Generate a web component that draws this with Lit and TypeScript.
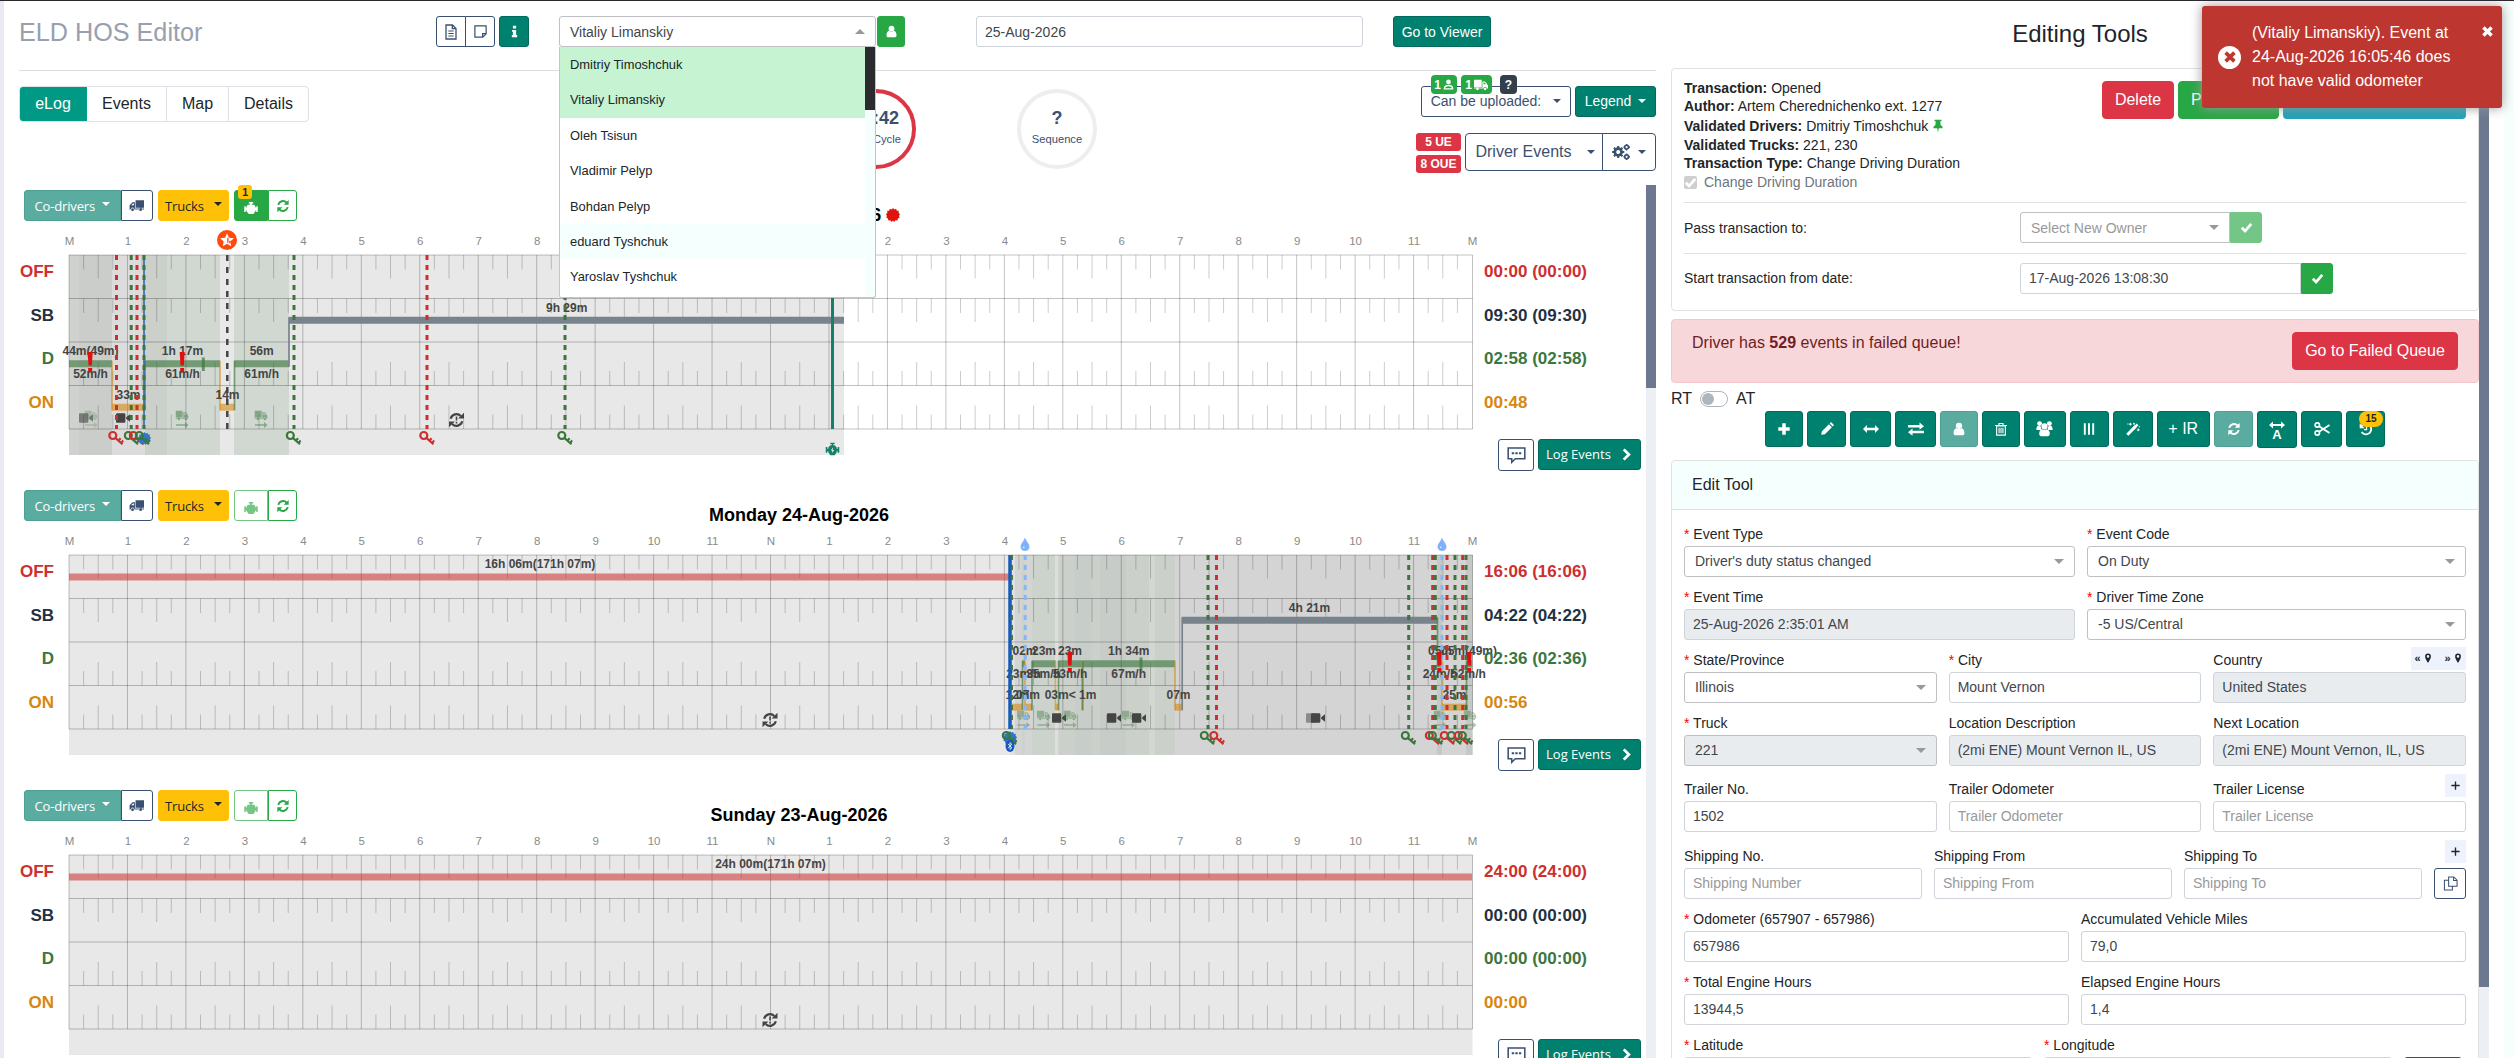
import { LitElement, html, svg, css, nothing } from "lit";
import { customElement, property } from "lit/decorators.js";

const ICONS: Record<string, unknown> = {
  file: svg`<path d="M3 1h6.5L13 4.5V15H3z M9.3 1v3.7H13" fill="none" stroke="currentColor" stroke-width="1.3"/><path d="M5.3 7h5.4M5.3 9.5h5.4M5.3 12h5.4" stroke="currentColor" stroke-width="1.1"/>`,
  note: svg`<path d="M2 2h12v8.5L10.5 14H2z M14 10.3h-3.7V14" fill="none" stroke="currentColor" stroke-width="1.3"/>`,
  info: svg`<path d="M6 1h4v3.4H6zM5 6h5v6.4h1.3V15H4.7v-2.6H6V8.4H5z" fill="currentColor"/>`,
  user: svg`<circle cx="8" cy="4.4" r="3.6" fill="currentColor"/><path d="M1.8 12.6C1.8 9 3.6 7 5.2 7c1.8 1.4 3.8 1.4 5.6 0 1.6 0 3.4 2 3.4 5.6 0 1.700-1 2.600-2.400 2.600H4.200c-1.400 0-2.400-.9-2.400-2.600z" fill="currentColor"/>`,
  userLine: svg`<circle cx="8" cy="4.200" r="3.400" fill="currentColor"/><path d="M2 14.300c0-3.300 2.400-4.800 6-4.800s6 1.500 6 4.800z" fill="none" stroke="currentColor" stroke-width="2"/>`,
  truck: svg`<path d="M16 2.500H7v8h9zM6.300 4.500H3.700L.6 7.600v4.600h1.200a2 2 0 0 1 4 0h4.600a2 2 0 0 1 4 0H16v-1H6.300zM5.300 5.800v2H2.200l2-2z" fill="currentColor" fill-rule="evenodd"/><circle cx="3.800" cy="12.400" r="1.500" fill="currentColor"/><circle cx="12.400" cy="12.400" r="1.500" fill="currentColor"/>`,
  truckR: svg`<path d="M0 2h8.800v8.500H0zM9.600 4h2.800L15 6.800v1l1 .4v3.900h-1.300a2 2 0 0 0-4 0H6a2 2 0 0 0-4 0H0v-.9h9.600zM10.900 5.200v2h2.800l-1.800-2z" fill="currentColor" fill-rule="evenodd"/><circle cx="4" cy="12.400" r="1.600" fill="currentColor"/><circle cx="12.700" cy="12.400" r="1.600" fill="currentColor"/>`,
  engine: svg`<path d="M5.500 1h5v1.800H9v1.400h2.600l1.400 1.800v1.400h1V6h1.700v6.500H14v-1.700h-1v1l-2.300 3H5.400L3 11.800v-1H2v1.700H.3V6H2v1.400h1V6l1.400-1.800H7V2.800H5.500z" fill="currentColor"/>`,
  engineBolt: svg`<path d="M5.500.8h5v1.600H9v1.400h1.500l2.300 2.400v1.400h1.100V5.800H16v6.600h-2.100v-1.800h-1.100v1.200l-2.300 3.400h-5l-2.300-3.400v-1.200H2.100v1.800H0V5.800h2.100v1.800h1.100V6.200l2.300-2.400H7V2.400H5.500zM8.700 6L6 9.700h1.700l-.4 3 2.700-3.700H8.300z" fill="currentColor" fill-rule="evenodd"/>`,
  sync: svg`<path d="M2.600 6.700A5.600 5.600 0 0 1 12 4M13.400 9.300A5.600 5.600 0 0 1 4 12" fill="none" stroke="currentColor" stroke-width="2.200"/><path d="M14.500 1v5.700H8.800zM1.500 15V9.300h5.700z" fill="currentColor"/>`,
  syncAlert: svg`<path d="M2.200 6.700A6 6 0 0 1 12.300 4M13.800 9.300A6 6 0 0 1 3.700 12" fill="none" stroke="currentColor" stroke-width="2.200"/><path d="M15.500 .8v5.800H9.600zM.5 15.200V9.400h5.900z" fill="currentColor"/><path d="M8 4.600v4M8 9.800v1.600" stroke="currentColor" stroke-width="1.600"/>`,
  comment: svg`<path d="M1 2.500h14v9H7l-3 3v-3H1z" fill="none" stroke="currentColor" stroke-width="1.300"/><path d="M4 7h2M7 7h2M10 7h2" stroke="currentColor" stroke-width="1.600"/>`,
  chevron: svg`<path d="M4.600 1.700L10.900 8l-6.300 6.300" fill="none" stroke="currentColor" stroke-width="3.400"/>`,
  gears: svg`<circle cx="5.500" cy="8" r="3" fill="none" stroke="currentColor" stroke-width="2.400"/><path d="M5.500 2.600v2M5.500 11.400v2M.1 8h2M8.900 8h2M1.700 4.200l1.400 1.400M7.900 10.400l1.400 1.400M9.300 4.200L7.900 5.600M3.100 10.400l-1.400 1.400" stroke="currentColor" stroke-width="1.800"/><circle cx="13" cy="3.700" r="1.700" fill="none" stroke="currentColor" stroke-width="1.500"/><circle cx="13" cy="12.300" r="1.700" fill="none" stroke="currentColor" stroke-width="1.500"/><path d="M13 .8v1M13 5.600v1M10.200 3.700h1M15 3.700h1M13 9.400v1M13 14.200v1M10.200 12.300h1M15 12.300h1" stroke="currentColor" stroke-width="1.300"/>`,
  check: svg`<path d="M2.200 8.400L6.300 12.400 13.800 3.600" fill="none" stroke="currentColor" stroke-width="3.400"/>`,
  pin: svg`<path d="M4 .8h8v1.700h-1.400l.4 4.400 2.200 2v1.700H8.900L8 15.500l-.9-4.900H2.800V8.900l2.200-2 .4-4.400H4z" fill="currentColor"/>`,
  marker: svg`<path d="M8 .8a4.600 4.600 0 0 1 4.600 4.600C12.600 9 8 15.500 8 15.500S3.400 9 3.400 5.400A4.600 4.600 0 0 1 8 .8zm0 2.500a2.100 2.100 0 1 0 0 4.200 2.100 2.100 0 0 0 0-4.200z" fill="currentColor" fill-rule="evenodd"/>`,
  times: svg`<path d="M3 3l10 10M13 3L3 13" stroke="currentColor" stroke-width="4.200"/>`,
  plus: svg`<path d="M8 1.500v13M1.500 8h13" stroke="currentColor" stroke-width="4"/>`,
  plusThin: svg`<path d="M8 2v12M2 8h12" stroke="currentColor" stroke-width="2"/>`,
  pencil: svg`<path d="M1.300 14.700l.9-4.200 8-8 3.400 3.400-8 8zM11 1.700l.9-.9c.5-.5 1-.5 1.500 0l2 2c.5.5.5 1 0 1.500l-.9.9zM2.900 11.900l1.300 1.300" fill="currentColor"/>`,
  arrowsH: svg`<path d="M0 8l4-4v2.700h8V4l4 4-4 4V9.300H4V12z" fill="currentColor"/>`,
  exchange: svg`<path d="M0 4h11.500V1.500L16 5.200l-4.500 3.600V6.400H0zM16 9.800H4.500V7.600L0 11.200l4.500 3.600v-2.500H16z" fill="currentColor"/>`,
  trash: svg`<path d="M3 4.500h10V15H3zM1.200 4h13.600M5.700 4V1.700h4.600V4M5.800 6.500v6.300M8 6.500v6.300M10.200 6.500v6.300" fill="none" stroke="currentColor" stroke-width="1.300"/>`,
  users: svg`<circle cx="3.400" cy="3.400" r="2.300" fill="currentColor"/><circle cx="12.600" cy="3.400" r="2.300" fill="currentColor"/><circle cx="8" cy="6" r="2.900" fill="currentColor"/><path d="M.3 9.400C.3 6.500 1.500 5.500 2 5.500l2.600.6c0 1.500.3 2.300 1 3.300zM15.700 9.400c0-2.900-1.200-3.900-1.700-3.900l-2.600.6c0 1.500-.3 2.300-1 3.300zM3 13c0-2.800 1.500-4.300 2.700-4.300 1.400 1.100 3.200 1.100 4.600 0C11.500 8.700 13 10.200 13 13c0 1.300-.8 2.300-2 2.300H5c-1.200 0-2-1-2-2.300z" fill="currentColor"/>`,
  bars: svg`<path d="M3.200 1.500v13M8 1.500v13M12.800 1.500v13" stroke="currentColor" stroke-width="2.200"/>`,
  magic: svg`<path d="M1.500 14.500L11 5" stroke="currentColor" stroke-width="3.400"/><path d="M10 6l3.200-3.200" stroke="currentColor" stroke-width="2.800"/><path d="M5 1v3M3.500 2.500h3M1.500 2.300h1.400M9.200 1v2M8.200 2h2M14 7.500v3M12.500 9h3M14.500 5.500h1.400" stroke="currentColor" stroke-width="1.100"/>`,
  scissors: svg`<circle cx="3.300" cy="4" r="2.200" fill="none" stroke="currentColor" stroke-width="1.700"/><circle cx="3.300" cy="12" r="2.200" fill="none" stroke="currentColor" stroke-width="1.700"/><path d="M5 5.200L15.500 12M5 10.800L15.500 4" stroke="currentColor" stroke-width="1.800"/>`,
  history: svg`<path d="M3.300 4.300A6 6 0 1 1 3 11.500" fill="none" stroke="currentColor" stroke-width="2.100"/><path d="M.8 1.500v5.700h5.700z" fill="currentColor"/><path d="M8.600 4.500v4.200H5.800" fill="none" stroke="currentColor" stroke-width="1.500"/>`,
  copy: svg`<path d="M6 1h5.500L15 4.500V11H6zM11.300 1v3.700H15M6 4.500H1.500V15H10v-4" fill="none" stroke="currentColor" stroke-width="1.100"/>`,
  key: svg`<circle cx="4.800" cy="5" r="3.500" fill="none" stroke="currentColor" stroke-width="2.200"/><path d="M7.300 7.400l7.200 6.400M10.300 10.300l2.300-2.600M12.900 12.600l2.300-2.600" fill="none" stroke="currentColor" stroke-width="2.100"/>`,
  camera: svg`<path d="M0 4c0-1 .6-1.500 1.500-1.500h7.700c.9 0 1.500.6 1.500 1.500v8c0 1-.6 1.500-1.500 1.500H1.500C.6 13.500 0 13 0 12zM11.600 7.200L16 3.600v8.800l-4.400-3.600z" fill="currentColor"/>`,
  burst: svg`<path d="M8 0l1.500 1.800L11.600.9l.7 2.200 2.300.1-.2 2.300L16 7l-1.200 2 .9 2.100-2.200.8-.3 2.300-2.300-.2L9.300 16 8 14.400 6.300 16l-1.500-1.900-2.200.2-.3-2.300L.3 11l.8-2L0 7l1.600-1.500-.2-2.300 2.300-.1L4.400.9l2.100.9z" fill="currentColor"/>`,
  star: svg`<circle cx="8" cy="8" r="8" fill="#ff4a0f"/><path d="M8 2.500l1.600 3.600 3.900.4-2.900 2.600.8 3.900L8 11l-3.400 2 .8-3.900L2.500 6.500l3.900-.4z" fill="#fff"/><path d="M8.700 6.200v4M10.300 8.500v2" stroke="#ff4a0f" stroke-width="1.100"/>`,
  drop: svg`<path d="M8 .5C9 4 13 7 13 10.600a5 5 0 0 1-10 0C3 7 7 4 8 .5z" fill="currentColor" stroke="currentColor"/><circle cx="6.500" cy="11.400" r=".9" fill="#fff"/>`,
  bluetooth: svg`<ellipse cx="8" cy="8" rx="6" ry="8" fill="currentColor"/><path d="M5.300 5.300l5.200 5L8 12.600V3.400l2.500 2.300-5.200 5" fill="none" stroke="#fff" stroke-width="1"/>`,
};

const icon = (name: string, size = 16) =>
  html`<svg class="ic" width=${size} height=${size} viewBox="0 0 16 16">${ICONS[name]}</svg>`;

const glyph = (name: string, cx: number, cy: number, size: number, color: string, opacity = 1) =>
  svg`<svg x=${cx - size / 2} y=${cy - size / 2} width=${size} height=${size} viewBox="0 0 16 16" color=${color} opacity=${opacity}>${ICONS[name]}</svg>`;

type Status = "OFF" | "SB" | "D" | "ON";
interface Segment { s: Status; a: number; b: number; }
interface Label { t: string; x: number; y: number; }
interface Marker { x: number; c: string; dash?: string; w?: number; }
interface Mark { i: string; x: number; y: number; size: number; c: string; o?: number; }
interface Zone { a: number; b: number; c: string; }
interface Day {
  title: string; live?: boolean; engineOn?: boolean;
  zones: Zone[]; segs: Segment[]; labels: Label[]; markers: Marker[]; marks: Mark[];
  alerts: number[]; ticks: number[]; totals: string[];
}

const RED = "#cd2f2f", GREEN = "#3c763d", SKY = "#84b6fb";
const LINE_Y: Record<Status, number> = { OFF: 22, SB: 65.300, D: 108.800, ON: 152.200 };
const LINE_C: Record<Status, string> = { OFF: "rgba(205,47,47,.56)", SB: "#79838b", D: "rgba(60,118,61,.62)", ON: "rgba(214,135,15,.6)" };
const X0 = 69, HOUR = 58.46;
const HOURS = ["M", "1", "2", "3", "4", "5", "6", "7", "8", "9", "10", "11", "N", "1", "2", "3", "4", "5", "6", "7", "8", "9", "10", "11", "M"];

const key = (x: number, c: string): Mark => ({ i: "key", x: x + 1.500, y: 183.500, size: 16, c });
const truck = (x: number, o = 0.500): Mark => ({ i: "truckR", x, y: 160.500, size: 13, c: GREEN, o });
const cam = (x: number, o = 1): Mark => ({ i: "camera", x, y: 163, size: 14, c: "#444", o });

const DAYS: Day[] = [
  {
    title: "Tuesday 25-Aug-2026", live: true, engineOn: true,
    zones: [
      { a: 69, b: 844, c: "#e8e8e8" }, { a: 69, b: 112, c: "#cfd2ce" }, { a: 79, b: 112, c: "#cacdca" },
      { a: 112, b: 145, c: "#dcdcdc" }, { a: 145, b: 220, c: "#d1d8d1" }, { a: 145, b: 167, c: "#cbd0cb" }, { a: 234, b: 289, c: "#d1d8d1" },
    ],
    segs: [
      { s: "D", a: 69, b: 112 }, { s: "ON", a: 112, b: 145 }, { s: "D", a: 145, b: 220 }, { s: "ON", a: 220, b: 234.500 },
      { s: "D", a: 234.500, b: 289 }, { s: "SB", a: 289, b: 844 },
    ],
    labels: [
      { t: "44m(49m)", x: 90.500, y: 96 }, { t: "52m/h", x: 90.500, y: 119 }, { t: "33m", x: 128.500, y: 140 },
      { t: "1h 17m", x: 182.500, y: 96 }, { t: "61m/h", x: 182.500, y: 119 }, { t: "14m", x: 227.500, y: 140 },
      { t: "56m", x: 261.700, y: 96 }, { t: "61m/h", x: 261.700, y: 119 }, { t: "9h 29m", x: 566.700, y: 53 },
    ],
    markers: [
      { x: 116.500, c: RED }, { x: 131.200, c: GREEN }, { x: 137, c: RED }, { x: 144, c: "#1f5fa8", dash: "none", w: 1.500 },
      { x: 144, c: GREEN }, { x: 227.300, c: "#444", dash: "6 6", w: 2.500 }, { x: 294, c: GREEN }, { x: 427, c: RED },
      { x: 565, c: GREEN }, { x: 832.500, c: "#15806a", dash: "none", w: 3 },
    ],
    marks: [
      cam(86, 0.600), truck(91, 0.250), cam(123), truck(182), truck(261), { i: "syncAlert", x: 456.500, y: 165, size: 16, c: "#444" },
      key(114.500, RED), key(130, GREEN), key(135, RED), { i: "burst", x: 144.500, y: 183.500, size: 13, c: "#2f78c4" }, key(141, GREEN),
      key(292, GREEN), key(425.500, RED), key(563.500, GREEN),
      { i: "engineBolt", x: 832.500, y: 194, size: 14, c: "#15806a" }, { i: "star", x: 227, y: -15, size: 20, c: RED },
    ],
    alerts: [90.200, 182.200], ticks: [203.300],
    totals: ["00:00 (00:00)", "09:30 (09:30)", "02:58 (02:58)", "00:48"],
  },
  {
    title: "Monday 24-Aug-2026",
    zones: [
      { a: 69, b: 1010, c: "#e8e8e8" }, { a: 1010, b: 1472.500, c: "#d4d4d4" }, { a: 1010, b: 1015, c: "#e0e0e0" },
      { a: 1022, b: 1025, c: "#ccd2cc" }, { a: 1032, b: 1055, c: "#ccd2cc" }, { a: 1055, b: 1058.500, c: "#dedede" }, { a: 1058.500, b: 1175, c: "#cbd0cb" },
      { a: 1075, b: 1092, c: "#c7cdc8" }, { a: 1100, b: 1126, c: "#c8ccc8" }, { a: 1149, b: 1155, c: "#d2d8d0" },
      { a: 1437, b: 1442, c: "#c5c9c5" }, { a: 1466, b: 1472.500, c: "#c5c9c5" },
    ],
    segs: [
      { s: "OFF", a: 69, b: 1010 }, { s: "ON", a: 1012, b: 1022.500 }, { s: "D", a: 1022.500, b: 1025 }, { s: "ON", a: 1025, b: 1032 },
      { s: "D", a: 1032, b: 1055.500 }, { s: "ON", a: 1055.500, b: 1058.500 }, { s: "D", a: 1058.500, b: 1082 }, { s: "ON", a: 1082, b: 1082.800 }, { s: "D", a: 1082.800, b: 1175 },
      { s: "ON", a: 1175, b: 1182.200 }, { s: "SB", a: 1182.200, b: 1437.500 }, { s: "D", a: 1437.500, b: 1442 }, { s: "ON", a: 1442, b: 1466.500 }, { s: "D", a: 1466.500, b: 1472 },
    ],
    labels: [
      { t: "16h 06m(171h 07m)", x: 540, y: 9 },
      { t: "02m", x: 1024.500, y: 96 }, { t: "23m", x: 1044, y: 96 }, { t: "23m", x: 1070, y: 96 }, { t: "1h 34m", x: 1128.700, y: 96 },
      { t: "23m/h", x: 1023.500, y: 119 }, { t: "35m/h", x: 1043.500, y: 119 }, { t: "53m/h", x: 1070, y: 119 }, { t: "67m/h", x: 1128.700, y: 119 },
      { t: "12m", x: 1017.500, y: 140 }, { t: "07m", x: 1028, y: 140 }, { t: "03m", x: 1056.700, y: 140 }, { t: "< 1m", x: 1082.500, y: 140 },
      { t: "07m", x: 1178.500, y: 140 }, { t: "4h 21m", x: 1309.500, y: 53 },
      { t: "05m", x: 1440, y: 96 }, { t: "05m(49m)", x: 1469, y: 96 }, { t: "24m/h", x: 1440, y: 119 }, { t: "52m/h", x: 1468.500, y: 119 }, { t: "25m", x: 1454.500, y: 140 },
    ],
    markers: [
      { x: 1010, c: "#1559c0", dash: "none", w: 3.500 }, { x: 1011.700, c: GREEN, w: 2.500 }, { x: 1025.200, c: SKY }, { x: 1208, c: GREEN }, { x: 1216.500, c: RED },
      { x: 1408.700, c: GREEN }, { x: 1432.700, c: RED }, { x: 1435.300, c: GREEN }, { x: 1442, c: SKY }, { x: 1447, c: RED },
      { x: 1455, c: GREEN }, { x: 1462.700, c: RED }, { x: 1466, c: GREEN },
    ],
    marks: [
      truck(1023.500, 0.400), truck(1043.500, 0.400), cam(1059), truck(1070, 0.400), cam(1114), truck(1128.500, 0.400), cam(1139),
      cam(1313, 0.500), cam(1318), truck(1440, 0.400), truck(1470, 0.400), { i: "syncAlert", x: 770, y: 165, size: 16, c: "#444" },
      { i: "burst", x: 1010, y: 183, size: 14, c: "#2f78c4" }, key(1008, GREEN), { i: "bluetooth", x: 1010, y: 191, size: 12, c: "#1559c0" },
      key(1206, GREEN), key(1215.500, RED), key(1407, GREEN), key(1431, RED), key(1434, GREEN), key(1446, RED), key(1453, GREEN), key(1460, RED), key(1464, GREEN),
      { i: "drop", x: 1025, y: -10.500, size: 13, c: "#7fb1fb" }, { i: "drop", x: 1442, y: -10.500, size: 13, c: "#7fb1fb" },
    ],
    alerts: [1069.800, 1439.300, 1469.200], ticks: [1141],
    totals: ["16:06 (16:06)", "04:22 (04:22)", "02:36 (02:36)", "00:56"],
  },
  {
    title: "Sunday 23-Aug-2026",
    zones: [{ a: 69, b: 1472.500, c: "#e8e8e8" }],
    segs: [{ s: "OFF", a: 69, b: 1472 }],
    labels: [{ t: "24h 00m(171h 07m)", x: 770.500, y: 9 }],
    markers: [], marks: [{ i: "syncAlert", x: 770, y: 165, size: 16, c: "#444" }], alerts: [], ticks: [],
    totals: ["24:00 (24:00)", "00:00 (00:00)", "00:00 (00:00)", "00:00"],
  },
];

const shared = css`
  * { box-sizing: border-box; }
  .ic { display: block; flex: none; }
  .btn { display: flex; align-items: center; justify-content: center; height: 31px; border: 1px solid transparent; border-radius: 3px;
    font: 13px/18px "Open Sans", "Noto Sans", sans-serif; white-space: nowrap; color: #fff; gap: 7px; }
  .teal { background: #00806e; border-color: #006b5c; }
  .soft { background: #5aaca1; border-color: #4f9f95; }
  .navy { background: #fff; border-color: #3b5070; color: #3b5070; }
  .green { background: #28a745; border-color: #28a745; }
  .pale { background: #74c686; border-color: #74c686; }
  .red { background: #dc3545; border-color: #dc3545; }
  .caret { width: 0; height: 0; border: 4.500px solid transparent; border-top-color: currentColor; border-bottom: 0; flex: none; }
`;

@customElement("day-log")
export class DayLog extends LitElement {
  @property({ attribute: false }) day!: Day;

  static styles = [shared, css`
    :host { display: block; height: 300px; padding-top: 5px; }
    .head { display: flex; height: 31px; padding-left: 20px; }
    .tools { display: flex; width: 273px; }
    .co { width: 97px; border-radius: 3px 0 0 3px; }
    .tr { width: 32px; margin-right: 5px; border-radius: 0 3px 3px 0; }
    .trucks { width: 72px; margin-right: 5px; background: #ffc107; border-color: #ffc107; color: #212529; gap: 10px; }
    .co, .trucks { letter-spacing: -.15px; }
    .co .caret, .trucks .caret { margin-top: -3px; }
    .eng { width: 34px; border-radius: 3px 0 0 3px; position: relative; padding-top: 4px; }
    .eng.off { background: #fff; border-color: #74c686; color: #74c686; }
    .badge { position: absolute; left: 3px; top: -6px; width: 14px; height: 14px; border-radius: 3px; background: #ffc107; color: #212529;
      font: bold 10.500px/14px "Liberation Sans", Arial, sans-serif; text-align: center; }
    .re { width: 29px; background: #fff; border-color: #28a745; color: #28a745; border-radius: 0 3px 3px 0; }
    .title { width: 1004px; padding-top: 18px; display: flex; justify-content: center; align-items: center; gap: 5px; font: bold 18px/24px "Liberation Sans", Arial, sans-serif; color: #000; white-space: nowrap; }
    .title .ic { color: #e0140c; }
    .body { display: flex; height: 264px; }
    .names { width: 50px; padding-top: 29px; text-align: right; font: bold 17px/43.500px "Liberation Sans", Arial, sans-serif; }
    .sums { width: 162px; padding-top: 29px; font: bold 17px/43.500px "Liberation Sans", Arial, sans-serif; white-space: nowrap; }
    .off-c { color: #cd2f2f; } .sb-c { color: #1f3244; } .d-c { color: #3c763d; } .on-c { color: #d6870f; }
    .graph { display: block; overflow: visible; flex: none; }
    .hour { font: 11.500px "Liberation Sans", Arial, sans-serif; fill: #8a8a8a; text-anchor: middle; }
    .lab { font: bold 12px "Liberation Sans", Arial, sans-serif; fill: #444; text-anchor: middle; }
    .acts { display: flex; gap: 4px; margin-top: 14.500px; padding-left: 14px; }
    .cm { width: 36px; height: 32px; }
    .le { width: 103px; gap: 9px; }
  `];

  private grid() {
    let minor = "";
    let major = "";
    for (let h = 0; h < 24; h++) {
      for (let q = 0; q < 4; q++) {
        const x = (X0 + HOUR * (h + q / 4)).toFixed(2);
        if (q === 0) { major += `M${x} 0V174`; continue; }
        const len = q === 2 ? 23.500 : 14.500;
        minor += `M${x} 0v${len}M${x} 43.500v${len}M${x} 130.500v${-len}M${x} 174v${-len}`;
      }
    }
    major += "M1472.500 0V174M69 0H1472.500M69 43.500H1472.500M69 87H1472.500M69 130.500H1472.500M69 174H1472.500";
    return svg`<path d=${minor} stroke="#000" stroke-opacity=".2"/><path d=${major} stroke="#000" stroke-opacity=".24" fill="none"/>`;
  }

  private line(segs: Segment[]) {
    return segs.map((g, i) => {
      const next = segs[i + 1];
      const joined = next && Math.abs(next.a - g.b) < 0.100;
      const c = joined ? LINE_C[next.s] : "";
      return svg`<path d=${`M${g.a} ${LINE_Y[g.s]}H${g.b}`} stroke=${LINE_C[g.s]} stroke-width="7"/>
        ${joined ? svg`<path d=${`M${g.b} ${Math.min(LINE_Y[g.s], LINE_Y[next.s]) - 3}V${Math.max(LINE_Y[g.s], LINE_Y[next.s]) + 3}`} stroke=${c} stroke-width="1.700"/>` : nothing}`;
    });
  }

  render() {
    const d = this.day;
    return html`
      <div class="head">
        <div class="tools">
          <div class="btn soft co">Co-drivers <span class="caret"></span></div>
          <div class="btn navy tr">${icon("truck", 15)}</div>
          <div class="btn trucks">Trucks <span class="caret"></span></div>
          <div class="btn green eng ${d.engineOn ? "" : "off"}">${icon("engine", 14)}${d.engineOn ? html`<span class="badge">1</span>` : nothing}</div>
          <div class="btn re">${icon("sync", 14)}</div>
        </div>
        <div class="title"><span>${d.title}</span>${d.live ? icon("burst", 14) : nothing}</div>
      </div>
      <div class="body">
        <div class="names"><div class="off-c">OFF</div><div class="sb-c">SB</div><div class="d-c">D</div><div class="on-c">ON</div></div>
        <svg class="graph" width="1430" height="240" viewBox="54 -34 1430 240">
          ${d.zones.map((z) => svg`<rect x=${z.a} y="0" width=${z.b - z.a} height="200" fill=${z.c}/>`)}
          ${this.grid()}
          ${HOURS.map((h, i) => svg`<text class="hour" x=${X0 + HOUR * i + 0.500} y="-10">${h}</text>`)}
          ${this.line(d.segs)}
          ${d.ticks.map((x) => svg`<path d=${`M${x} 102.500v13.500`} stroke="rgba(60,118,61,.7)" stroke-width="3"/>`)}
          ${d.labels.map((l) => svg`<text class="lab" x=${l.x} y=${l.y + 4}>${l.t}</text>`)}
          ${d.marks.filter((m) => m.y > 155 && m.y < 170).map((m) => svg`${glyph(m.i, m.x, m.y, m.size, m.c, m.o ?? 1)}
            ${m.i === "truckR" ? svg`<path d=${`M${m.x - 6} 169.300h9v-2.300l3.500 3-3.500 3v-2.300h-9z`} fill=${m.c} opacity=${m.o ?? 1}/>` : nothing}`)}
          ${d.markers.map((m) => svg`<path d=${`M${m.x} 0V174`} stroke=${m.c} stroke-width=${m.w ?? 3} stroke-dasharray=${m.dash ?? "5 5"}/>`)}
          ${d.alerts.map((x) => svg`<path d=${`M${x - 2.500} 97h5l-.8 13.500h-3.400zM${x - 2} 113h4v4h-4z`} fill="#e01010"/>`)}
          ${d.marks.filter((m) => m.y <= 155 || m.y >= 170).map((m) => glyph(m.i, m.x, m.y, m.size, m.c, m.o ?? 1))}
        </svg>
        <div class="sums">
          <div class="off-c">${d.totals[0]}</div><div class="sb-c">${d.totals[1]}</div><div class="d-c">${d.totals[2]}</div><div class="on-c">${d.totals[3]}</div>
          <div class="acts"><div class="btn navy cm">${icon("comment", 19)}</div><div class="btn teal le">Log Events ${icon("chevron", 13)}</div></div>
        </div>
      </div>`;
  }
}

interface FieldOpts { req?: boolean; sel?: boolean; dis?: boolean; ph?: boolean; extra?: unknown; }
const field = (label: string, value: string, o: FieldOpts = {}) => html`
  <div class="field">
    <div class="label"><span>${o.req ? html`<span class="req">* </span>` : nothing}${label}</span>${o.extra ?? nothing}</div>
    <div class="input ${o.sel ? "sel" : ""} ${o.dis ? "dis" : ""} ${o.ph ? "ph" : ""}"><span>${value}</span>${o.sel ? html`<span class="arrow"></span>` : nothing}</div>
  </div>`;

const TOOLS: { i?: string; w: number; soft?: boolean; t?: string; n?: string }[] = [
  { i: "plus", w: 38 }, { i: "pencil", w: 39 }, { i: "arrowsH", w: 41 }, { i: "exchange", w: 41 }, { i: "user", w: 37.500, soft: true },
  { i: "trash", w: 38 }, { i: "users", w: 42 }, { i: "bars", w: 39 }, { i: "magic", w: 40 }, { t: "+ IR", w: 53.500 },
  { i: "sync", w: 39, soft: true }, { t: "A", w: 40 }, { i: "scissors", w: 41 }, { i: "history", w: 39, n: "15" },
];

@customElement("app-root")
export class AppRoot extends LitElement {
  static styles = [shared, css`
    :host { display: flex; position: relative; width: 2514px; height: 1058px; overflow: hidden; background: #fff; border-top: 1px solid #2b2b2f; box-sizing: border-box;
      font: 14px/18px "Liberation Sans", Arial, sans-serif; color: #212529; }
    .edge { width: 4px; background: #e9e9f1; }
    .left { width: 1652px; display: flex; flex-direction: column; }
    .top { display: flex; margin-left: 15px; height: 70px; border-bottom: 1px solid #dcdce2; padding-top: 15px; align-items: flex-start; }
    .brand { width: 417px; font-size: 25.200px; line-height: 32px; color: #98a0ae; }
    .b1 { width: 30px; border-radius: 3px 0 0 3px; } .b2 { width: 30px; margin-left: -1px; border-radius: 0 3px 3px 0; }
    .b3 { width: 30px; margin-left: 4px; margin-right: 30px; }
    .picker { position: relative; width: 317px; z-index: 3; }
    .input { display: flex; align-items: center; justify-content: space-between; height: 31px; border: 1px solid #ced4da; border-radius: 3px; padding: 0 8px; background: #fff; color: #3f464d; white-space: nowrap; }
    .sel { border-color: #bfbfc4; padding: 0 10px; }
    .dis { background: #e9ecef; }
    .ph { color: #999; }
    .arrow { width: 0; height: 0; border: 5px solid transparent; border-top-color: #999; border-bottom: 0; }
    .picker .arrow { border-top: 0; border-bottom: 5px solid #999; }
    .menu { position: absolute; left: 0; top: 31px; width: 317px; height: 251px; border: 1px solid #c4c4c8; border-top: 0; border-radius: 0 0 3px 3px; background: #f5fffd; overflow: hidden; display: flex; }
    .opts { width: 305px; background: #fff; }
    .opt { height: 35.400px; padding-left: 10px; font-size: 12.900px; line-height: 35.400px; }
    .opt.on { background: #c6f3d2; } .opt.hov { background: #f5fffd; }
    .bar { width: 10px; height: 63px; background: #2b2b2f; }
    .own { width: 28px; margin-left: 1px; }
    .date { width: 387px; margin: 0 30px 0 71px; }
    .view { width: 98px; font: 14px/18px "Liberation Sans", Arial, sans-serif; }
    .mid { display: flex; height: 114px; margin-left: 15px; }
    .tabs { display: flex; margin-top: 15px; height: 36px; border: 1px solid #dee2e6; border-radius: 4px; width: 290px; font-size: 16px; line-height: 34px; text-align: center; overflow: hidden; }
    .tab { border-left: 1px solid #dee2e6; }
    .tab.on { background: #009985; color: #fff; margin: -1px 0 -1px -1px; line-height: 36px; border: 0; width: 68px; }
    .t2 { width: 79px; border: 0; } .t3 { width: 62px; } .t4 { flex: 1; }
    .rings { display: flex; margin: 18px 0 0 527px; gap: 101px; width: 580px; }
    .ring { width: 80px; height: 80px; border-radius: 50%; border: 4px solid #eee; display: flex; flex-direction: column; align-items: center; padding-top: 13px; color: #3b5070; font-size: 11.200px; line-height: 14px; white-space: nowrap; }
    .ring.warn { border-color: #dc3545; }
    .ring b { font-size: 18px; line-height: 24px; margin-bottom: 2px; }
    .acts { flex: 1; display: flex; flex-direction: column; align-items: flex-end; padding-top: 15px; gap: 16px; }
    .row { display: flex; }
    .up { width: 150px; position: relative; font: 14px/18px "Liberation Sans", Arial, sans-serif; gap: 12px; margin-right: 4px; padding-bottom: 1px; }
    .tags { position: absolute; left: 9px; top: -12px; display: flex; gap: 4px; color: #fff; font: bold 12px/18px "Liberation Sans", Arial, sans-serif; }
    .tag { height: 19px; border-radius: 4px; background: #28a745; display: flex; align-items: center; justify-content: center; gap: 2px; }
    .g1 { width: 26px; } .g2 { width: 31px; } .g3 { width: 17px; background: #343f4d; margin-left: 4px; }
    .lg { width: 81px; font: 14px/18px "Liberation Sans", Arial, sans-serif; padding-bottom: 1px; }
    .ue { display: flex; flex-direction: column; gap: 4px; margin-right: 4px; }
    .ue div { width: 45px; height: 18px; border-radius: 3px; background: #dc3545; color: #fff; font: bold 12px/18px "Liberation Sans", Arial, sans-serif; text-align: center; }
    .de { width: 138px; height: 38px; border-radius: 4px 0 0 4px; font: 16px/20px "Liberation Sans", Arial, sans-serif; gap: 15px; padding-left: 2px; }
    .ge { width: 54px; height: 38px; margin-left: -1px; border-radius: 0 4px 4px 0; gap: 8px; }
    .scroll { display: flex; height: 873px; overflow: hidden; }
    .days { width: 1642px; }
    .track { width: 10px; background: #eceff3; }
    .thumb { background: #6b7890; height: 203px; }
    .right { width: 833px; margin-left: 15px; }
    .right h1 { margin: 0; height: 66.500px; width: 818px; padding-top: 17px; font-weight: 400; font-size: 24px; line-height: 32px; text-align: center; }
    .rs { display: flex; height: 991px; }
    .rs .thumb { height: 919px; }
    .col { width: 808px; }
    .strip { flex: 1; background: #f7fffd; }
    .card { border: 1px solid #dfe1e5; border-radius: 4px; }
    .trx { height: 243px; padding: 12px 12px 0; }
    .trx-top { display: flex; justify-content: space-between; height: 122.500px; border-bottom: 1px solid #dee0e3; }
    .meta { line-height: 18px; margin-top: -1.500px; }
    .meta .dr { display: flex; align-items: center; gap: 3px; height: 21px; }
    .meta .dr .ic { color: #28a745; }
    .chk { display: flex; align-items: center; gap: 7px; color: #6c757d; height: 20px; }
    .box { width: 13px; height: 13px; border-radius: 2px; background: #cfcfcf; color: #fff; display: flex; }
    .big { display: flex; gap: 4px; }
    .big .btn { height: 38px; font: 16px/20px "Liberation Sans", Arial, sans-serif; border-radius: 4px; }
    .k1 { width: 72px; } .k2 { width: 101px; } .big .k2 { justify-content: flex-start; padding-left: 12px; } .k3 { width: 183px; background: #20a0b8; }
    .line { display: flex; height: 51px; border-bottom: 1px solid #dee0e3; align-items: center; padding-bottom: 1px; }
    .line.last { border: 0; height: 50px; padding-bottom: 2px; }
    .line > span { width: 336px; }
    .w1 { width: 210px; border-radius: 3px 0 0 3px; } .w2 { width: 281px; border-radius: 3px 0 0 3px; }
    .ok { width: 32px; border-radius: 0 3px 3px 0; }
    .alert { display: flex; justify-content: space-between; height: 64px; margin-top: 8px; padding: 12px 20px; background: #f8d7da; border: 1px solid #f5c6cb; border-radius: 4px; color: #721c24; font-size: 16px; line-height: 22px; }
    .fq { width: 166px; height: 38px; font: 16px/20px "Liberation Sans", Arial, sans-serif; border-radius: 4px; }
    .rt { display: flex; align-items: center; gap: 8px; font-size: 16px; height: 16px; margin-top: 8px; }
    .sw { width: 28px; height: 16px; border: 1px solid #adb5bd; border-radius: 8px; padding: 1px; display: flex; }
    .sw i { width: 12px; height: 12px; border-radius: 50%; background: #adb5bd; }
    .bar2 { display: flex; gap: 4px; margin: 4px 0 0 94px; height: 36px; }
    .bar2 .btn { height: 36px; position: relative; font: 16px/18px "Liberation Sans", Arial, sans-serif; }
    .bar2 .alpha { flex-direction: column; gap: 0; height: 37px; padding-top: 2px; font: bold 13px/11px "Liberation Sans", Arial, sans-serif; }
    .num { position: absolute; left: 12px; top: -1px; width: 24px; height: 16px; border-radius: 8px; background: #ffc107; color: #212529; font: bold 10px/15px "Liberation Sans", Arial, sans-serif; text-align: center; }
    .edit { margin-top: 13px; height: 640px; }
    .eh { height: 49px; line-height: 48px; font-size: 16px; padding-left: 20px; background: #f5fffd; border-bottom: 1px solid #dfe1e5; border-radius: 4px 4px 0 0; }
    .form { padding: 12px 12px 0; }
    .fr { display: grid; column-gap: 12px; margin-bottom: 8px; }
    .c2a { grid-template-columns: 391px 379px; } .c2 { grid-template-columns: 1fr 1fr; } .c3 { grid-template-columns: 1fr 1fr 1fr; }
    .c4 { grid-template-columns: 1fr 1fr 1fr 32px; } .c5 { grid-template-columns: 348px 348px 58px; }
    .m3 { margin-top: 11px; } .m4 { margin-top: 12px; }
    .label { height: 24px; line-height: 24px; display: flex; justify-content: space-between; white-space: nowrap; }
    .req { color: #f00; }
    .mini { display: flex; align-items: center; justify-content: center; background: #eef2fd; height: 23px; margin-top: -1px; }
    .m22 { width: 55px; gap: 12px; } .m22 span { display: flex; align-items: center; gap: 2px; font: bold 11px/12px "Liberation Sans", Arial, sans-serif; }
    .m1 { width: 21px; margin-top: -3px; }
    .end { display: flex; flex-direction: column; align-items: flex-end; }
    .end .btn { width: 32px; }
    .end .mini { margin-top: -4px; margin-bottom: 5px; }
    .end .long { width: 58px; margin-top: 24px; }
    .toast { position: absolute; left: 2202px; top: 5px; width: 300px; height: 102px; background: #bd362f; border-radius: 3px; box-shadow: 0 0 12px #999; color: #fff; display: flex; align-items: center; font-size: 16px; line-height: 24px; z-index: 5; }
    .x { width: 23px; height: 23px; border-radius: 50%; background: #fff; color: #bd362f; display: flex; align-items: center; justify-content: center; margin: 0 11px 0 16px; }
    .cl { margin: -52px 0 0 31px; }
  `];

  render() {
    return html`
      <div class="edge"></div>
      <div class="left">
        <div class="top">
          <div class="brand">ELD HOS Editor</div>
          <div class="btn navy b1">${icon("file", 16)}</div><div class="btn navy b2">${icon("note", 15)}</div><div class="btn teal b3">${icon("info", 13)}</div>
          <div class="picker">
            <div class="input sel"><span>Vitaliy Limanskiy</span><span class="arrow"></span></div>
            <div class="menu">
              <div class="opts">
                <div class="opt on">Dmitriy Timoshchuk</div><div class="opt on">Vitaliy Limanskiy</div><div class="opt">Oleh Tsisun</div>
                <div class="opt">Vladimir Pelyp</div><div class="opt">Bohdan Pelyp</div><div class="opt hov">eduard Tyshchuk</div><div class="opt">Yaroslav Tyshchuk</div>
              </div>
              <div class="bar"></div>
            </div>
          </div>
          <div class="btn green own">${icon("user", 13)}</div>
          <div class="input date">25-Aug-2026</div>
          <div class="btn teal view">Go to Viewer</div>
        </div>
        <div class="mid">
          <div class="tabs"><div class="tab on">eLog</div><div class="tab t2">Events</div><div class="tab t3">Map</div><div class="tab t4">Details</div></div>
          <div class="rings">
            <div class="ring warn"><b>51:42</b><span>70h Cycle</span></div>
            <div class="ring"><b>?</b><span>Sequence</span></div>
          </div>
          <div class="acts">
            <div class="row">
              <div class="btn navy up">Can be uploaded: <span class="caret"></span>
                <div class="tags"><span class="tag g1">1 ${icon("userLine", 11)}</span><span class="tag g2">1 ${icon("truckR", 14)}</span><span class="tag g3">?</span></div>
              </div>
              <div class="btn teal lg">Legend <span class="caret"></span></div>
            </div>
            <div class="row">
              <div class="ue"><div>5 UE</div><div>8 OUE</div></div>
              <div class="btn navy de">Driver Events <span class="caret"></span></div>
              <div class="btn navy ge">${icon("gears", 18)} <span class="caret"></span></div>
            </div>
          </div>
        </div>
        <div class="scroll">
          <div class="days">${DAYS.map((d) => html`<day-log .day=${d}></day-log>`)}</div>
          <div class="track"><div class="thumb"></div></div>
        </div>
      </div>
      <div class="right">
        <h1>Editing Tools</h1>
        <div class="rs">
          <div class="col">
            <div class="card trx">
              <div class="trx-top">
                <div class="meta">
                  <div><b>Transaction:</b> Opened</div><div><b>Author:</b> Artem Cherednichenko ext. 1277</div>
                  <div class="dr"><span><b>Validated Drivers:</b> Dmitriy Timoshchuk</span>${icon("pin", 14)}</div>
                  <div><b>Validated Trucks:</b> 221, 230</div><div><b>Transaction Type:</b> Change Driving Duration</div>
                  <div class="chk"><span class="box">${icon("check", 13)}</span>Change Driving Duration</div>
                </div>
                <div class="big"><div class="btn red k1">Delete</div><div class="btn green k2">Publish</div><div class="btn k3"></div></div>
              </div>
              <div class="line"><span>Pass transaction to:</span><div class="input sel ph w1">Select New Owner<span class="arrow"></span></div><div class="btn pale ok">${icon("check", 13)}</div></div>
              <div class="line last"><span>Start transaction from date:</span><div class="input w2">17-Aug-2026 13:08:30</div><div class="btn green ok">${icon("check", 13)}</div></div>
            </div>
            <div class="alert"><span>Driver has <b>529</b> events in failed queue!</span><div class="btn red fq">Go to Failed Queue</div></div>
            <div class="rt">RT <span class="sw"><i></i></span> AT</div>
            <div class="bar2">
              ${TOOLS.map((t) => html`<div class="btn ${t.soft ? "soft" : "teal"} ${t.t === "A" ? "alpha" : ""}" style="width:${t.w}px">
                ${t.t === "A" ? html`<svg class="ic" width="16" height="8" viewBox="0 0 16 8"><path d="M0 4l4-3.500V3h8V.5L16 4l-4 3.500V5H4v2.500z" fill="currentColor"/></svg>` : nothing}${t.t ?? icon(t.i!, t.i === "users" ? 17 : t.i === "arrowsH" || t.i === "exchange" || t.i === "scissors" ? 16 : 14)}
                ${t.n ? html`<span class="num">${t.n}</span>` : nothing}</div>`)}
            </div>
            <div class="card edit">
              <div class="eh">Edit Tool</div>
              <div class="form">
                <div class="fr c2a">${field("Event Type", "Driver's duty status changed", { req: true, sel: true })}${field("Event Code", "On Duty", { req: true, sel: true })}</div>
                <div class="fr c2a">${field("Event Time", "25-Aug-2026 2:35:01 AM", { req: true, dis: true })}${field("Driver Time Zone", "-5 US/Central", { req: true, sel: true })}</div>
                <div class="fr c3">${field("State/Province", "Illinois", { req: true, sel: true })}${field("City", "Mount Vernon", { req: true })}
                  ${field("Country", "United States", { dis: true, extra: html`<div class="mini m22"><span>«${icon("marker", 10)}</span><span>»${icon("marker", 10)}</span></div>` })}</div>
                <div class="fr c3">${field("Truck", "221", { req: true, sel: true, dis: true })}${field("Location Description", "(2mi ENE) Mount Vernon IL, US", { dis: true })}${field("Next Location", "(2mi ENE) Mount Vernon, IL, US", { dis: true })}</div>
                <div class="fr c3 m3">${field("Trailer No.", "1502")}${field("Trailer Odometer", "Trailer Odometer", { ph: true })}
                  ${field("Trailer License", "Trailer License", { ph: true, extra: html`<div class="mini m1">${icon("plusThin", 11)}</div>` })}</div>
                <div class="fr c4 m4">${field("Shipping No.", "Shipping Number", { ph: true })}${field("Shipping From", "Shipping From", { ph: true })}${field("Shipping To", "Shipping To", { ph: true })}
                  <div class="end"><div class="mini m1">${icon("plusThin", 11)}</div><div class="btn navy">${icon("copy", 15)}</div></div></div>
                <div class="fr c2">${field("Odometer (657907 - 657986)", "657986", { req: true })}${field("Accumulated Vehicle Miles", "79,0")}</div>
                <div class="fr c2">${field("Total Engine Hours", "13944,5", { req: true })}${field("Elapsed Engine Hours", "1,4")}</div>
                <div class="fr c5">${field("Latitude", "", { req: true })}${field("Longitude", "", { req: true })}<div class="end"><div class="btn navy long"></div></div></div>
              </div>
            </div>
          </div>
          <div class="track"><div class="thumb"></div></div>
        </div>
      </div>
      <div class="strip"></div>
      <div class="toast"><span class="x">${icon("times", 14)}</span><span>(Vitaliy Limanskiy). Event at<br>24-Aug-2026 16:05:46 does<br>not have valid odometer</span><span class="cl">${icon("times", 13)}</span></div>
    `;
  }
}
